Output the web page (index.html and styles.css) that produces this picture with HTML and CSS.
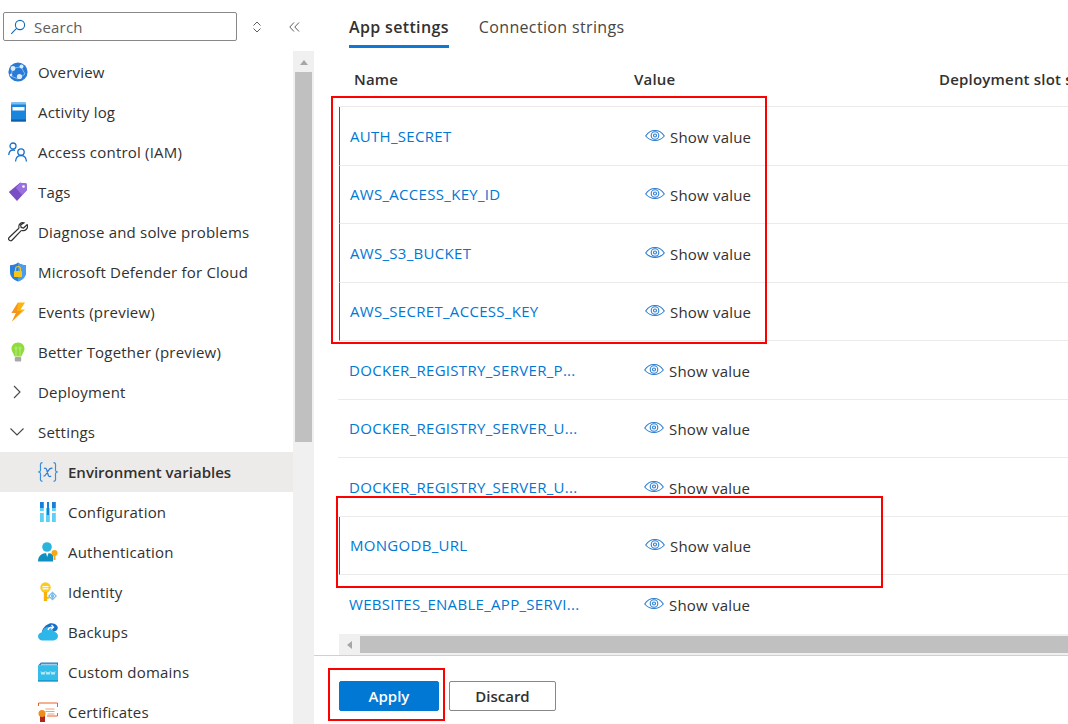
FILE: index.html
```html
<!DOCTYPE html>
<html lang="en">
<head>
    <meta charset="UTF-8">
    <title>Environment variables</title>
    <link rel="stylesheet" href="styles.css">
</head>
<body>
    <aside class="sidebar">
        <div class="search-row">
            <div class="search-box">
                <svg width="16" height="16" viewBox="0 0 16 16" fill="none" stroke="#0f6cbd" stroke-width="1.1"><circle cx="10" cy="6" r="4.6"/><path d="M6.6 9.4 1.2 14.8"/></svg>
                <span>Search</span>
            </div>
            <svg class="updown" width="10" height="12" viewBox="0 0 10 12" fill="none" stroke="#605e5c"><path d="M1.5 4.5 5 1l3.5 3.5M1.5 7.500 5 11l3.500-3.500"/></svg>
            <svg class="collapse" width="11" height="10" viewBox="0 0 11 10" fill="none" stroke="#605e5c"><path d="M5 .5.8 5 5 9.500M10 .5 5.800 5 10 9.500"/></svg>
        </div>
        <div class="nav-wrap">
            <nav class="nav">
                <a class="nav-item">
                    <svg width="20" height="20" viewBox="0 0 20 20"><circle cx="10" cy="10" r="9.600" fill="#2a7bd6"/><path d="M5 6l8-1 4 7-7 5-7-3z" fill="none" stroke="#9cc7f2" stroke-width=".8"/><circle cx="5" cy="6.500" r="2.400" fill="#dcecfb"/><circle cx="13.500" cy="4.500" r="2" fill="#dcecfb"/><circle cx="11.500" cy="14.500" r="2.600" fill="#dcecfb"/><circle cx="3" cy="13" r="1.300" fill="#dcecfb"/></svg>
                    <span>Overview</span>
                </a>
                <a class="nav-item">
                    <svg width="20" height="20" viewBox="0 0 20 20"><rect x="3" y="0.500" width="15" height="19" rx="1" fill="#1a85dc"/><rect x="3" y="17.500" width="15" height="2" fill="#0f5fa8"/><rect x="3" y="0.500" width="15" height="2" fill="#7fbcef"/><rect x="4.500" y="5" width="12" height="3.500" fill="#fff"/></svg>
                    <span>Activity log</span>
                </a>
                <a class="nav-item">
                    <svg width="20" height="20" viewBox="0 0 20 20" fill="none" stroke="#1a6fc9" stroke-width="1.300"><circle cx="5" cy="4" r="3"/><path d="M.7 13c.3-3 2-5 4.300-5 .8 0 1.500.2 2 .6"/><circle cx="13" cy="10" r="3.200"/><path d="M7.500 19.500c.3-3.500 2.500-6 5.500-6s5.200 2.500 5.500 6"/></svg>
                    <span>Access control (IAM)</span>
                </a>
                <a class="nav-item">
                    <svg width="20" height="20" viewBox="0 0 20 20"><path d="M12 .8 18.500 1.500 19 8 9 19 .8 10z" fill="#7b4fc4"/><path d="M12 .8 18.500 1.500 19 8 14 13 8 6z" fill="#9a6fe0"/><circle cx="15.500" cy="4.500" r="1.300" fill="#fff"/></svg>
                    <span>Tags</span>
                </a>
                <a class="nav-item">
                    <svg width="20" height="20" viewBox="0 0 20 20" fill="none" stroke="#323130" stroke-width="1.200"><path d="M19 2.800 15.600 6l-2.400-.6-.6-2.400L15.900.9c-2.600-.9-5.400 1.100-5 4 .1.600.1 1.200-.3 1.600L1.400 15.200c-1 1-1 2.200-.2 3 .8.800 2.100.8 3-.2l8.700-9.100c.4-.4 1-.5 1.600-.3 2.800.6 5.800-2.200 5-5.800z"/></svg>
                    <span>Diagnose and solve problems</span>
                </a>
                <a class="nav-item">
                    <svg width="20" height="20" viewBox="0 0 20 20"><path d="M10 .5c2.200 1.800 4.800 2.600 8 2.700V10c0 4.500-3.200 8-8 9.500C5.200 18 2 14.500 2 10V3.200C5.200 3.100 7.800 2.300 10 .5z" fill="#2a7fdc"/><path d="M10 .5c2.200 1.800 4.800 2.600 8 2.700V10c0 4.500-3.200 8-8 9.500z" fill="#4a9cec"/><rect x="6" y="9" width="8" height="6" rx=".6" fill="#f5c518"/><path d="M7.500 9V7a2.500 2.500 0 0 1 5 0v2" fill="none" stroke="#f5c518" stroke-width="1.200"/></svg>
                    <span>Microsoft Defender for Cloud</span>
                </a>
                <a class="nav-item">
                    <svg width="20" height="20" viewBox="0 0 20 20"><path d="M10 .5h7L12.500 7.500H17L4 19.500 8 11H3.500z" fill="#fcb415"/><path d="M4 19.500 8 11H3.500L10 .5 9 9h4.500z" fill="#f7941d"/></svg>
                    <span>Events (preview)</span>
                </a>
                <a class="nav-item">
                    <svg width="20" height="20" viewBox="0 0 20 20"><path d="M10 .5c3.800 0 6.500 2.800 6.500 6.200 0 3.100-2.300 4.500-3 7.800h-7c-.7-3.300-3-4.700-3-7.800C3.500 3.300 6.200.5 10 .5z" fill="#8fdc3c"/><path d="M8 7c-1.500 0-1.500-2 0-2s1.500 2 0 2zm0 0v7m4-7c1.500 0 1.500-2 0-2s-1.500 2 0 2zm0 0v7" fill="none" stroke="#c8f09a" stroke-width=".7"/><rect x="6.800" y="15" width="6.400" height="4.500" rx="1" fill="#a8a8a8"/></svg>
                    <span>Better Together (preview)</span>
                </a>
                <a class="nav-item">
                    <svg width="20" height="20" viewBox="0 0 20 20" fill="none" stroke="#484644" stroke-width="1.100"><path d="M6 4l6 6-6 6"/></svg>
                    <span>Deployment</span>
                </a>
                <a class="nav-item">
                    <svg width="20" height="20" viewBox="0 0 20 20" fill="none" stroke="#484644" stroke-width="1.100"><path d="M2.500 6.500 9 13l6.500-6.500"/></svg>
                    <span>Settings</span>
                </a>
                <a class="nav-item sub active">
                    <svg width="20" height="20" viewBox="0 0 20 20" fill="none" stroke="#3b8ede" stroke-width="1.200"><path d="M4.500.6C1.800.6 2.500 3 2.500 6S2.800 9.400.6 10c2.200.6 1.900 1 1.900 4s-.7 5.400 2 5.400M15.500.6c2.700 0 2 2.400 2 5.400s-.3 3.400 1.900 4c-2.200.6-1.900 1-1.900 4s.7 5.400-2 5.400"/><path d="M6 6.500c1.500-.8 2.500 0 3 2.500l1.200 4c.5 1.800 1.800 2 3 .8M14.500 6.300c-1.800-.4-3.500 1-4.500 3L7.500 13c-.6.9-1.300 1.200-2 .8" stroke="#2b7cd3"/></svg>
                    <span>Environment variables</span>
                </a>
                <a class="nav-item sub">
                    <svg width="20" height="20" viewBox="0 0 20 20"><rect x="2" y="6" width="3.800" height="14" fill="#5ed0f5"/><rect x="8" y="6" width="3.800" height="14" fill="#5ed0f5"/><rect x="14" y="6" width="3.800" height="14" fill="#5ed0f5"/><rect x="2" y="0" width="3.800" height="6" fill="#1a7fd8"/><rect x="9" y="0" width="2" height="13" fill="#1a7fd8"/><rect x="14" y="0" width="3.800" height="6" fill="#1a7fd8"/><rect x="2" y="9" width="3.800" height="2" fill="#fff"/><rect x="14" y="9" width="3.800" height="2" fill="#fff"/></svg>
                    <span>Configuration</span>
                </a>
                <a class="nav-item sub">
                    <svg width="20" height="20" viewBox="0 0 20 20"><circle cx="9" cy="5" r="4.800" fill="#29b4de"/><path d="M0 19.500c0-5.500 3.500-8.500 9-8.500 3 0 5 .8 6 2v6.500z" fill="#0f8fc0"/><path d="M8 11h2.500L9.200 15z" fill="#fff"/><circle cx="16.500" cy="11" r="3" fill="#f5a81c"/><rect x="15.500" y="12" width="2" height="6" fill="#f5a81c"/></svg>
                    <span>Authentication</span>
                </a>
                <a class="nav-item sub">
                    <svg width="20" height="20" viewBox="0 0 20 20"><circle cx="7.500" cy="5.500" r="5.200" fill="#fccb1c"/><rect x="5.800" y="10" width="3.400" height="9" fill="#f5b30c"/><rect x="9" y="15" width="2.500" height="1.600" fill="#f5b30c"/><rect x="4.500" y="4" width="6" height="1.200" fill="#fff"/><rect x="4.500" y="6.200" width="6" height="1.200" fill="#fff"/><path d="M14.500 9.500 19 14l-4.500 4.500L10 14z" fill="#7fbde8"/><path d="M13.500 12.500 12 14l1.500 1.500m2-3L17 14l-1.500 1.500" fill="none" stroke="#fff" stroke-width=".8"/></svg>
                    <span>Identity</span>
                </a>
                <a class="nav-item sub">
                    <svg width="20" height="20" viewBox="0 0 20 20"><path d="M4.500 18.500C2 18.500 0 16.800 0 14.500c0-2 1.500-3.700 3.500-4 .6-3 3-5 6-5 2.800 0 5 1.700 5.800 4.200 2.600 0 4.700 2 4.700 4.400s-2 4.400-4.500 4.400z" fill="#2db7e8"/><path d="M4 10c.5-3.800 3.500-7 7.500-8.500C14 .6 18 1.500 19.500 4.500 20.500 7 18.500 9.500 15.300 9.700 14.500 7 12.300 5.500 9.500 5.500 7 5.500 5 7.500 4 10z" fill="#1a6fc9"/><path d="M10 8c.5-2 2.500-3 5-2.800M13.500 3l2 2.200-2.200 2" fill="none" stroke="#fff" stroke-width="1.200"/></svg>
                    <span>Backups</span>
                </a>
                <a class="nav-item sub">
                    <svg width="20" height="20" viewBox="0 0 20 20"><path d="M0 3.500 3 .5h17v3z" fill="#2d7ab8"/><rect x="0" y="3.500" width="20" height="16" fill="#35bdea"/><rect x="3" y="1.800" width="16" height="1" fill="#bfe4f7"/><rect x="0" y="18" width="20" height="1.500" fill="#1a9cd0"/><path d="M2 9.500l1 3 1-2.500 1 2.500 1-3M7 9.500l1 3 1-2.500 1 2.500 1-3M12 9.500l1 3 1-2.500 1 2.500 1-3" fill="none" stroke="#e5f6fd" stroke-width=".8" transform="translate(1 0)"/></svg>
                    <span>Custom domains</span>
                </a>
                <a class="nav-item sub">
                    <svg width="20" height="20" viewBox="0 0 20 20"><path d="M.5 4V1h19v4M19.500 11v3H9" fill="none" stroke="#e8622a" stroke-width="1"/><path d="M7.500 7h9M7.500 9.500h9M9.500 12h7" stroke="#e8a27e" stroke-width="1"/><rect x="2" y="13" width="5" height="7" fill="#b0251c"/><circle cx="4" cy="11.500" r="3.500" fill="#f08c1e"/></svg>
                    <span>Certificates</span>
                </a>
            </nav>
            <div class="vscroll">
                <i class="arrow-up"></i>
                <div class="vthumb"></div>
            </div>
        </div>
    </aside>

    <main class="main">
        <div class="tabs">
            <a class="tab selected">App settings</a>
            <a class="tab">Connection strings</a>
        </div>
        <div class="grid">
            <div class="grid-head">
                <span class="col-name">Name</span>
                <span class="col-value">Value</span>
                <span class="col-slot">Deployment slot setting</span>
            </div>
            <div class="row changed"><a class="name">AUTH_SECRET</a><span class="value"><svg class="eye" width="20" height="14" viewBox="0 0 20 14" fill="none" stroke="#2b7cd3" stroke-width="1.100"><path d="M.7 7C3 3.300 6.200 1.500 10 1.500S17 3.300 19.300 7C17 9.700 13.800 11.500 10 11.500S3 9.700.7 7z"/><circle cx="10" cy="6.500" r="3.800"/><circle cx="10" cy="6.500" r="1.500"/></svg>Show value</span></div>
            <div class="row changed"><a class="name">AWS_ACCESS_KEY_ID</a><span class="value"><svg class="eye" width="20" height="14" viewBox="0 0 20 14" fill="none" stroke="#2b7cd3" stroke-width="1.100"><path d="M.7 7C3 3.300 6.200 1.500 10 1.500S17 3.300 19.300 7C17 9.700 13.800 11.500 10 11.500S3 9.700.7 7z"/><circle cx="10" cy="6.500" r="3.800"/><circle cx="10" cy="6.500" r="1.500"/></svg>Show value</span></div>
            <div class="row changed"><a class="name">AWS_S3_BUCKET</a><span class="value"><svg class="eye" width="20" height="14" viewBox="0 0 20 14" fill="none" stroke="#2b7cd3" stroke-width="1.100"><path d="M.7 7C3 3.300 6.200 1.500 10 1.500S17 3.300 19.300 7C17 9.700 13.800 11.500 10 11.500S3 9.700.7 7z"/><circle cx="10" cy="6.500" r="3.800"/><circle cx="10" cy="6.500" r="1.500"/></svg>Show value</span></div>
            <div class="row changed"><a class="name">AWS_SECRET_ACCESS_KEY</a><span class="value"><svg class="eye" width="20" height="14" viewBox="0 0 20 14" fill="none" stroke="#2b7cd3" stroke-width="1.100"><path d="M.7 7C3 3.300 6.200 1.500 10 1.500S17 3.300 19.300 7C17 9.700 13.800 11.500 10 11.500S3 9.700.7 7z"/><circle cx="10" cy="6.500" r="3.800"/><circle cx="10" cy="6.500" r="1.500"/></svg>Show value</span></div>
            <div class="row"><a class="name">DOCKER_REGISTRY_SERVER_P...</a><span class="value"><svg class="eye" width="20" height="14" viewBox="0 0 20 14" fill="none" stroke="#2b7cd3" stroke-width="1.100"><path d="M.7 7C3 3.300 6.200 1.500 10 1.500S17 3.300 19.300 7C17 9.700 13.800 11.500 10 11.500S3 9.700.7 7z"/><circle cx="10" cy="6.500" r="3.800"/><circle cx="10" cy="6.500" r="1.500"/></svg>Show value</span></div>
            <div class="row"><a class="name">DOCKER_REGISTRY_SERVER_U...</a><span class="value"><svg class="eye" width="20" height="14" viewBox="0 0 20 14" fill="none" stroke="#2b7cd3" stroke-width="1.100"><path d="M.7 7C3 3.300 6.200 1.500 10 1.500S17 3.300 19.300 7C17 9.700 13.800 11.500 10 11.500S3 9.700.7 7z"/><circle cx="10" cy="6.500" r="3.800"/><circle cx="10" cy="6.500" r="1.500"/></svg>Show value</span></div>
            <div class="row"><a class="name">DOCKER_REGISTRY_SERVER_U...</a><span class="value"><svg class="eye" width="20" height="14" viewBox="0 0 20 14" fill="none" stroke="#2b7cd3" stroke-width="1.100"><path d="M.7 7C3 3.300 6.200 1.500 10 1.500S17 3.300 19.300 7C17 9.700 13.800 11.500 10 11.500S3 9.700.7 7z"/><circle cx="10" cy="6.500" r="3.800"/><circle cx="10" cy="6.500" r="1.500"/></svg>Show value</span></div>
            <div class="row changed"><a class="name">MONGODB_URL</a><span class="value"><svg class="eye" width="20" height="14" viewBox="0 0 20 14" fill="none" stroke="#2b7cd3" stroke-width="1.100"><path d="M.7 7C3 3.300 6.200 1.500 10 1.500S17 3.300 19.300 7C17 9.700 13.800 11.500 10 11.500S3 9.700.7 7z"/><circle cx="10" cy="6.500" r="3.800"/><circle cx="10" cy="6.500" r="1.500"/></svg>Show value</span></div>
            <div class="row last"><a class="name">WEBSITES_ENABLE_APP_SERVI...</a><span class="value"><svg class="eye" width="20" height="14" viewBox="0 0 20 14" fill="none" stroke="#2b7cd3" stroke-width="1.100"><path d="M.7 7C3 3.300 6.200 1.500 10 1.500S17 3.300 19.300 7C17 9.700 13.800 11.500 10 11.500S3 9.700.7 7z"/><circle cx="10" cy="6.500" r="3.800"/><circle cx="10" cy="6.500" r="1.500"/></svg>Show value</span></div>
            <div class="hscroll">
                <i class="arrow-left"></i>
                <div class="hthumb"></div>
            </div>
        </div>
        <div class="footer">
            <button class="btn primary">Apply</button>
            <button class="btn">Discard</button>
        </div>
    </main>

    <div class="callout callout-one"></div>
    <div class="callout callout-two"></div>
    <div class="callout callout-three"></div>
</body>
</html>
```

FILE: styles.css
```css
html, body {
    height: 100%;
}

body {
    margin: 0;
    display: flex;
    overflow: hidden;
    position: relative;
    background-color: #fff;
    color: #323130;
    font-family: "Open Sans", "Noto Sans", sans-serif;
    font-size: 15px;
    letter-spacing: 0.2px;
}

svg {
    flex: none;
    display: block;
}

/* left menu */
.sidebar {
    width: 314px;
    flex: none;
    display: flex;
    flex-direction: column;
}

.search-row {
    height: 51px;
    flex: none;
    display: flex;
    align-items: center;
    padding: 2px 0 0 3px;
    box-sizing: border-box;
}

.search-box {
    width: 234px;
    height: 29px;
    box-sizing: border-box;
    border: 1px solid #8a8886;
    border-radius: 2px;
    display: flex;
    align-items: center;
    gap: 8px;
    padding-left: 6px;
    color: #605e5c;
}

.updown {
    margin-left: 15px;
}

.collapse {
    margin-left: 27px;
}

.nav-wrap {
    flex: 1;
    display: flex;
    min-height: 0;
}

.nav {
    width: 293px;
    padding-top: 1px;
    flex: none;
}

.nav-item {
    height: 40px;
    display: flex;
    align-items: center;
    gap: 10px;
    padding-left: 8px;
}

.nav-item.sub {
    padding-left: 38px;
}

.nav-item.active {
    background-color: #edebe9;
    font-weight: 600;
    letter-spacing: 0;
}

.vscroll {
    width: 21px;
    background-color: #f0f0f0;
    padding: 0 2px;
    box-sizing: border-box;
}

.arrow-up {
    display: block;
    width: 0;
    margin: 9px auto 7px;
    border: 4px solid transparent;
    border-top: 0;
    border-bottom: 5px solid #a6a6a6;
}

.vthumb {
    height: 370px;
    background-color: #c0c0c0;
}

/* main area */
.main {
    flex: 1;
    min-width: 0;
    display: flex;
    flex-direction: column;
}

.tabs {
    height: 51px;
    flex: none;
    display: flex;
    gap: 30px;
    padding-left: 35px;
    box-sizing: border-box;
}

.tab {
    height: 48px;
    box-sizing: border-box;
    padding-top: 15px;
    font-size: 16px;
    line-height: 24px;
    letter-spacing: 0.35px;
    color: #484644;
}

.tab.selected {
    font-weight: 600;
    color: #323130;
    border-bottom: 3px solid #0f78d4;
}

.grid {
    flex: 1;
    min-height: 0;
    margin-left: 24px;
    overflow: hidden;
}

.grid-head {
    height: 56px;
    box-sizing: border-box;
    display: flex;
    align-items: center;
    border-bottom: 1px solid #edebe9;
    font-weight: 600;
    white-space: nowrap;
}

.col-name {
    flex: none;
    width: 296px;
    padding-left: 16px;
    box-sizing: border-box;
}

.col-value {
    flex: none;
    width: 305px;
}

.row {
    height: 58.5px;
    box-sizing: border-box;
    display: flex;
    align-items: center;
    border-bottom: 1px solid #edebe9;
    padding-left: 11px;
}

.row.last {
    border-bottom: 0;
}

.row.changed {
    border-left: 1px solid #8a2da5;
    margin-left: 1px;
    padding-left: 10px;
}

.name {
    width: 295px;
    color: #0078d4;
    flex: none;
    white-space: nowrap;
    letter-spacing: 0.3px;
}

.value {
    display: flex;
    align-items: center;
    gap: 5px;
    padding-top: 2px;
}

.eye {
    margin-top: -2px;
}

.hscroll {
    height: 21.5px;
    margin-left: 1px;
    background-color: #f0f0f0;
    display: flex;
    align-items: flex-end;
    padding-bottom: 2px;
    box-sizing: border-box;
}

.arrow-left {
    width: 0;
    margin: 0 8px 4px 8px;
    border: 4px solid transparent;
    border-left: 0;
    border-right: 5px solid #a6a6a6;
}

.hthumb {
    flex: 1;
    height: 17px;
    background-color: #c0c0c0;
}

.footer {
    height: 69px;
    flex: none;
    box-sizing: border-box;
    border-top: 1px solid #d2d0ce;
    display: flex;
    gap: 10px;
    padding: 25px 0 0 25px;
}

.btn {
    width: 107px;
    height: 30px;
    box-sizing: border-box;
    border: 1px solid #8a8886;
    border-radius: 2px;
    background-color: #fff;
    color: #323130;
    font-family: inherit;
    font-size: 15px;
    font-weight: 600;
    padding: 0;
}

.btn.primary {
    width: 100px;
    background-color: #0078d4;
    border-color: #0078d4;
    color: #fff;
}

/* red boxes drawn over the screenshot */
.callout {
    position: absolute;
    box-sizing: border-box;
    border: 2px solid #f00;
}

.callout-one {
    left: 331px;
    top: 96px;
    width: 436px;
    height: 248px;
}

.callout-two {
    left: 336px;
    top: 496px;
    width: 547px;
    height: 92px;
}

.callout-three {
    left: 328px;
    top: 668px;
    width: 117px;
    height: 53px;
}
```
